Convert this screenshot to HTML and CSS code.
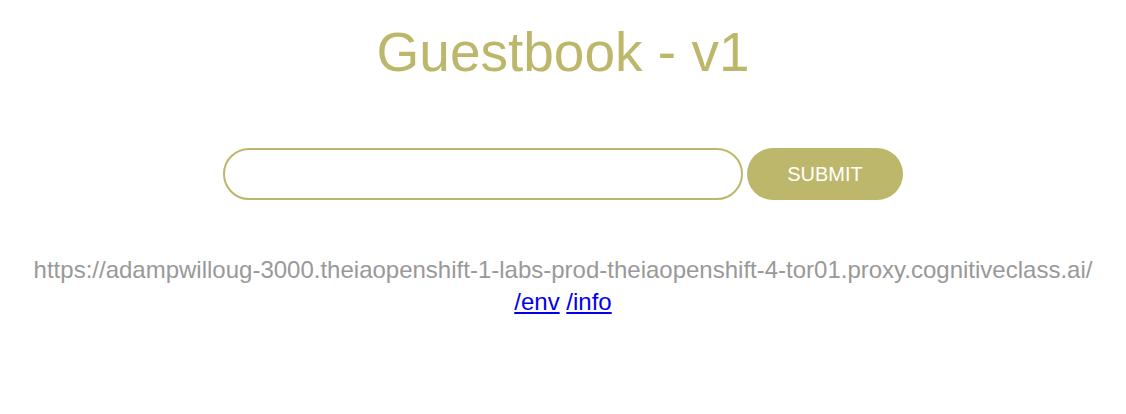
FILE: index.html
```html
<!DOCTYPE html>
<html>
<head>
<meta charset="utf-8">
<link rel="stylesheet" href="styles.css">
</head>
<body>
<div class="page">
  <h1 class="title">Guestbook - v1</h1>
  <form class="entry-form">
    <input class="entry-input" type="text">
    <button class="submit-btn" type="button">SUBMIT</button>
  </form>
  <div class="info">
    <div class="url">https://adampwilloug-3000.theiaopenshift-1-labs-prod-theiaopenshift-4-tor01.proxy.cognitiveclass.ai/</div>
    <div class="links"><a href="#">/env</a> <a href="#">/info</a></div>
  </div>
</div>
</body>
</html>
```
FILE: styles.css
```css
html, body {
  margin: 0;
  padding: 0;
  background: #ffffff;
}
body {
  font-family: "Liberation Sans", Arial, sans-serif;
}
.page {
  display: flex;
  flex-direction: column;
  align-items: center;
  padding-top: 20px;
}
.title {
  margin: 0;
  font-weight: normal;
  font-size: 55px;
  line-height: 64px;
  color: #bdb76b;
}
.entry-form {
  display: flex;
  align-items: center;
  gap: 4px;
  margin-top: 64px;
}
.entry-input {
  box-sizing: border-box;
  width: 520px;
  height: 52px;
  border: 2px solid #bdb76b;
  border-radius: 26px;
  outline: none;
  padding: 0 20px;
  font-size: 18px;
  font-family: inherit;
}
.submit-btn {
  box-sizing: border-box;
  width: 156px;
  height: 52px;
  border: none;
  border-radius: 26px;
  background: #bdb76b;
  color: #ffffff;
  font-size: 20px;
  font-family: inherit;
  padding: 0;
}
.info {
  margin-top: 54px;
  text-align: center;
  font-size: 24px;
  line-height: 32px;
}
.url {
  color: #999999;
}
.links a {
  color: #0000ee;
}
```
